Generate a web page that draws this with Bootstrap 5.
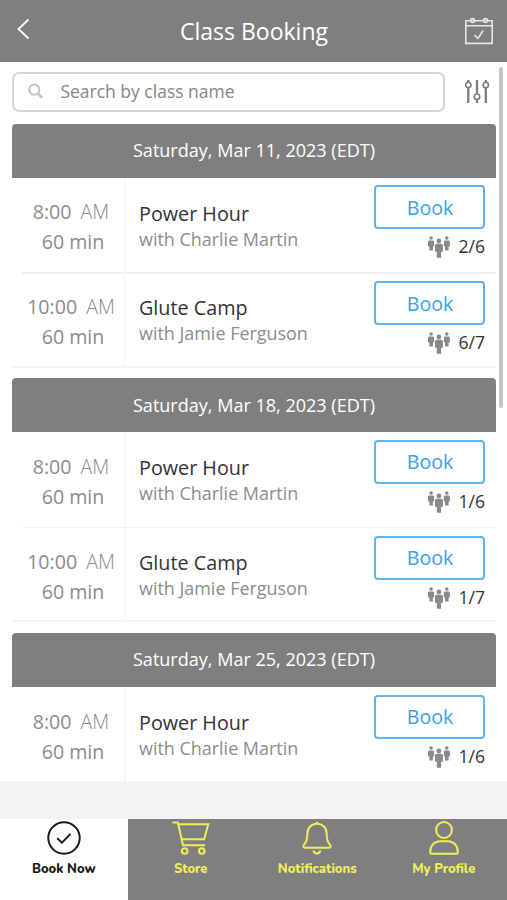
<!DOCTYPE html>
<html lang="en">
<head>
<meta charset="utf-8">
<meta name="viewport" content="width=device-width, initial-scale=1">
<title>Class Booking</title>
<link href="https://cdn.jsdelivr.net/npm/bootstrap@5.3.0/dist/css/bootstrap.min.css" rel="stylesheet">
<style>
body{font-family:"Open Sans","Noto Sans",sans-serif;height:900px;overflow:hidden;color:#333}
.topbar{height:61.5px;background:#7f7f7f;padding:0 14px 0 16px}
.topbar h1{font-size:23px;line-height:30px;padding:1px 1px 0 0}
.tools{height:62px;padding:10.5px 17px 0 12px}
.search-box{width:433px;height:39.5px;border:2px solid #d6d6d6;border-radius:7px;padding-left:14px}
.search-box input{font:17.5px "Open Sans",sans-serif;color:#858585;padding:0 0 1px 17px}
.search-box input::placeholder{color:#858585;opacity:1}
.schedule{height:657.5px;padding:0 11px 0 12px}
.day{height:254.75px}
.day-head{height:54px;background:#7f7f7f;border-radius:4px 4px 0 0;font-size:18.05px}
.slot{height:95px}
.rule+.slot{height:94.5px}
.slot-time{width:114px;border-right:2px solid #f6f8f9;font-size:19.6px;line-height:30px;color:#8c8c8c;padding-top:19.6px}
.slot-time .hour{margin-right:4px}
.slot-time .ampm{font-weight:300}
.slot-time .length{padding-left:10px}
.slot-time .start{padding-left:6px}
.slot-info{padding:22px 0 0 13px}
.slot-name{font-size:19.75px;line-height:28px}
.slot-coach{font-size:17.95px;line-height:22px;color:#8c8c8c}
.slot-side{width:111px;margin-right:11px;padding-top:7.8px}
.rule+.slot .slot-side{padding-top:8.3px}
.btn-book{height:44px;border:2px solid #5eb5e8;border-radius:4px;color:#3b9fe3;font-size:19.6px;line-height:1;padding:0 0 0 1px}
.seats{font-size:17.6px;line-height:25px;padding-top:5px}
.seats svg{margin-top:1px}
.rule{height:1.5px;background:#f0f1f2;margin:-.5px 0 -.5px 10px}
.rule+.slot .slot-time,.rule+.slot .slot-info{margin-top:-.7px}
.day-end{height:2px;background:#f2f5f6;margin-top:-2px;border-radius:2px}
.thumb{top:67px;right:4px;width:4px;height:341px;background:#c4c4c4;border-radius:2px}
.band{height:38px;background:#f3f3f3}
.tabs{height:81px;background:#7f7f7f}
.tab-item{font:800 13px "Nunito","Open Sans",sans-serif;color:#f2ee58;padding-top:1px}
.tab-item:first-child{background:#fff;color:#191919;width:127.5px}
.tab-item span{line-height:18px;margin-top:5px}
</style>
</head>
<body class="bg-white d-flex flex-column position-relative">
<svg width="0" height="0" class="position-absolute" aria-hidden="true">
  <symbol id="people" viewBox="0 0 22 22">
    <g fill="#8a8a8a"><circle cx="3.1" cy="2" r="1.8"/><path d="M1.300 4.500h3.600q1.200 0 1.200 1.200v4.700H4.900v4.200H1.400v-4.200H0V5.700q0-1.200 1.300-1.200z"/>
    <circle cx="18.8" cy="2" r="1.8"/><path d="M17 4.500h3.600q1.300 0 1.300 1.200v4.700h-1.300v4.200H17v-4.200h-1.200V5.700q0-1.200 1.200-1.200z"/>
    <circle cx="10.900" cy="5" r="2.400"/><path d="M8.500 7.800h4.900q1.500 0 1.500 1.500v6.400h-1.800v6H8.800v-6H7V9.300q0-1.500 1.500-1.500z"/></g>
  </symbol>
</svg>
<header class="topbar d-flex flex-shrink-0 align-items-center justify-content-between text-white">
  <svg width="28" height="24" viewBox="0 0 28 24" fill="none" stroke="#fff" stroke-width="1.8" class="mb-1"><path d="M12.500 2.500 2.500 12l10 9.500"/></svg>
  <h1 class="m-0 fw-normal">Class Booking</h1>
  <svg width="28" height="28" viewBox="0 0 28 28" fill="none" stroke="#e6e6e6" stroke-width="1.6"><path d="M.8 3.700h26.400v22.700H.8zM.8 8.800h26.400M9.500 18.100l3.400 3.400 5.200-8"/><g fill="#bdbdbd"><circle cx="7.500" cy="3.500" r="2"/><circle cx="20.500" cy="3.500" r="2"/></g></svg>
</header>
<div class="tools d-flex flex-shrink-0 justify-content-between">
  <div class="search-box d-flex align-items-center">
    <svg width="16" height="17" viewBox="0 0 16 17" fill="none" stroke="#c2c2c2"><circle cx="6.500" cy="6.600" r="5.300" stroke-width="2"/><path d="m10.500 10.700 4.300 4.400" stroke-width="2.700"/></svg>
    <input class="form-control border-0 shadow-none bg-transparent" placeholder="Search by class name" aria-label="Search by class name">
  </div>
  <svg width="25" height="26" viewBox="0 0 25 26" fill="none" stroke="#7c7c7c" stroke-width="2.300" class="mt-2"><g transform="translate(0 -.9)"><path d="M3.300 1v2M3.300 8.500v15.500M12 1v13.200M12 20.400v3.600M20.800 1v2M20.800 8.500v15.500"/><g stroke-width="1.600"><circle cx="3.300" cy="5.800" r="2.700"/><circle cx="12" cy="17.600" r="2.700"/><circle cx="20.800" cy="5.800" r="2.700"/></g></g></svg>
</div>
<main class="schedule flex-shrink-0 overflow-hidden" id="schedule"></main>
<div class="thumb position-absolute"></div>
<div class="band flex-shrink-0"></div>
<nav class="tabs d-flex flex-shrink-0">
  <div class="tab-item d-flex flex-column align-items-center flex-shrink-0">
    <svg width="38" height="35" viewBox="0 0 38 35" fill="none" stroke="currentColor" stroke-width="2"><circle cx="19" cy="18" r="15.700"/><path d="m12.200 18.200 4.800 4.500 8.500-8.800"/></svg>
    <span>Book Now</span>
  </div>
  <div class="tab-item col d-flex flex-column align-items-center">
    <svg width="38" height="35" viewBox="0 0 38 35" fill="none" stroke="currentColor" stroke-width="2"><path d="M.5 2.500h5.300L11 25.200h22.300M6.800 4.300h29.500l-4.200 14.900H10.200"/><circle cx="12.700" cy="31" r="2.800"/><circle cx="29.800" cy="31" r="2.800"/></svg>
    <span>Store</span>
  </div>
  <div class="tab-item col d-flex flex-column align-items-center">
    <svg width="38" height="35" viewBox="0 0 38 35" fill="none" stroke="currentColor" stroke-width="2" stroke-linejoin="round"><path d="M19 1.800v2M19 3.800c-5.500 0-9.600 4-9.600 9.500 0 7-1.200 9.300-3.300 11.300-1.400 1.400-.8 3.200 1 3.200h23.800c1.800 0 2.400-1.800 1-3.200-2.100-2-3.300-4.300-3.300-11.300 0-5.500-4.100-9.500-9.600-9.500zM15.500 30.500c.8 4 6.200 4 7 0"/></svg>
    <span>Notifications</span>
  </div>
  <div class="tab-item col d-flex flex-column align-items-center">
    <svg width="38" height="35" viewBox="0 0 38 35" fill="none" stroke="currentColor" stroke-width="2"><circle cx="19" cy="10" r="7.900"/><path d="M5.200 32.500c-.4-6.500 4-11.300 9.800-11.300h8c5.800 0 10.200 4.800 9.800 11.300q0 1.200-1.200 1.200H6.400q-1.200 0-1.200-1.200z"/></svg>
    <span>My Profile</span>
  </div>
</nav>
<script src="https://cdn.jsdelivr.net/npm/bootstrap@5.3.0/dist/js/bootstrap.bundle.min.js"></script>
<script>
const days=[["Mar 11",["2/6","6/7"]],["Mar 18",["1/6","1/7"]],["Mar 25",["1/6"]]];
const classes=[["8:00","Power Hour","Charlie Martin"],["10:00","Glute Camp","Jamie Ferguson"]];
document.getElementById("schedule").innerHTML=days.map(([date,seats])=>`
<section class="day">
  <div class="day-head d-flex align-items-center justify-content-center text-white">Saturday, ${date}, 2023 (EDT)</div>
  ${seats.map((s,i)=>`<div class="slot d-flex">
    <div class="slot-time text-center flex-shrink-0"><div class="start text-nowrap"><span class="hour">${classes[i][0]}</span> <span class="ampm">AM</span></div><div class="length">60 min</div></div>
    <div class="slot-info flex-grow-1"><div class="slot-name">${classes[i][1]}</div><div class="slot-coach">with ${classes[i][2]}</div></div>
    <div class="slot-side flex-shrink-0"><button class="btn btn-book w-100 d-block">Book</button>
      <div class="seats d-flex justify-content-end align-items-center gap-2"><svg width="22" height="22"><use href="#people"/></svg>${s}</div></div>
  </div>${i===0&&seats.length>1?'<div class="rule"></div>':''}`).join("")}
  ${seats.length>1?'<div class="day-end"></div>':''}
</section>`).join("");
</script>
</body>
</html>
